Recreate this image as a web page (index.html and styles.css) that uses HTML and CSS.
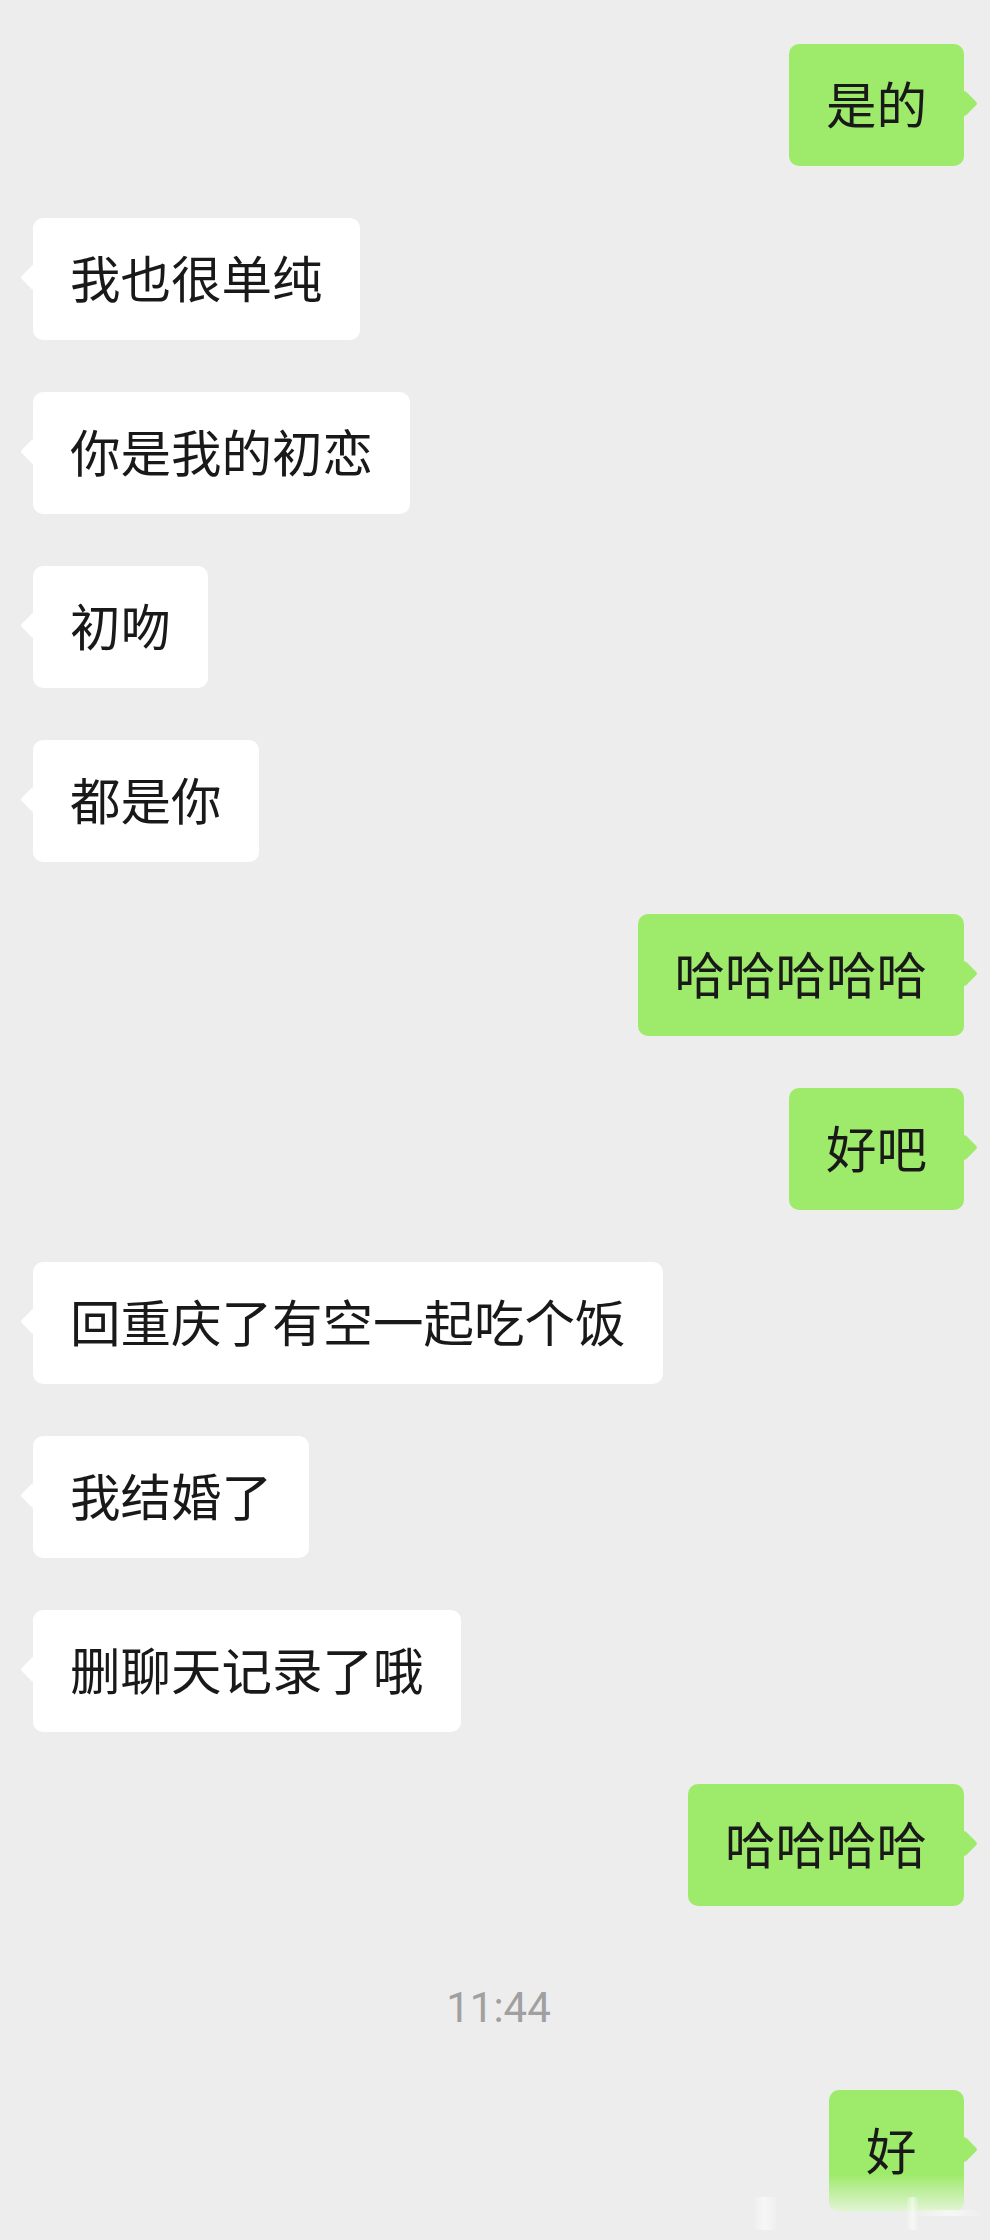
FILE: index.html
```html
<!DOCTYPE html>
<html lang="zh-CN">
<head>
    <meta charset="UTF-8">
    <meta name="viewport" content="width=device-width, initial-scale=1.0">
    <title>聊天记录</title>
    <link rel="stylesheet" href="styles.css">
</head>
<body>
    <div class="chat">
        <div class="row mine"><div class="bubble">是的</div></div>
        <div class="row theirs"><div class="bubble">我也很单纯</div></div>
        <div class="row theirs"><div class="bubble">你是我的初恋</div></div>
        <div class="row theirs"><div class="bubble">初吻</div></div>
        <div class="row theirs"><div class="bubble">都是你</div></div>
        <div class="row mine"><div class="bubble">哈哈哈哈哈</div></div>
        <div class="row mine"><div class="bubble">好吧</div></div>
        <div class="row theirs"><div class="bubble">回重庆了有空一起吃个饭</div></div>
        <div class="row theirs"><div class="bubble">我结婚了</div></div>
        <div class="row theirs"><div class="bubble">删聊天记录了哦</div></div>
        <div class="row mine"><div class="bubble">哈哈哈哈</div></div>
        <div class="time">11:44</div>
        <div class="row mine"><div class="bubble last">好</div></div>
    </div>
    <div class="ghost">
        <span class="bar bar-a"></span>
        <span class="bar bar-b"></span>
        <span class="bar bar-c"></span>
    </div>
</body>
</html>
```

FILE: styles.css
```css
html, body {
    margin: 0;
    padding: 0;
}
body {
    background: #ededed;
    font-family: "Noto Sans CJK SC", "Noto Sans", sans-serif;
    height: 2240px;
    overflow: hidden;
    position: relative;
}
.chat {
    display: flex;
    flex-direction: column;
    gap: 52px;
    padding: 44px 26px 0 33px;
}
.row {
    display: flex;
}
.row.mine {
    justify-content: flex-end;
}
.bubble {
    position: relative;
    min-width: 61px;
    font-size: 50.5px;
    line-height: 70px;
    padding: 23px 37px 29px;
    border-radius: 10px;
    color: #191919;
    background: #ffffff;
    white-space: nowrap;
}
.bubble::before {
    content: "";
    position: absolute;
    top: 50px;
    width: 19px;
    height: 19px;
    border-radius: 3px;
    background: inherit;
    transform: rotate(45deg);
}
.theirs .bubble::before {
    left: -9.5px;
}
.mine .bubble {
    background: #9eea6a;
}
.mine .bubble::before {
    right: -9.5px;
}
.mine .bubble.last {
    background: linear-gradient(to bottom, #9eea6a 0, #9eea6a 84px, #e3f4d8 122px);
}
.mine .bubble.last::before {
    background: #9eea6a;
}
.time {
    margin-top: 20px;
    height: 60px;
    line-height: 60px;
    text-align: center;
    font-family: Roboto, "Liberation Sans", sans-serif;
    font-size: 42px;
    color: #a0a0a0;
}
.ghost {
    position: absolute;
    left: 0;
    right: 0;
    bottom: 0;
    height: 50px;
    pointer-events: none;
}
.bar {
    position: absolute;
    background: linear-gradient(to right, rgba(255,255,255,0.1), rgba(255,255,255,0.55), rgba(255,255,255,0.1));
    border-radius: 4px;
}
.bar-a {
    left: 754px;
    top: 7px;
    width: 22px;
    height: 33px;
}
.bar-b {
    left: 907px;
    top: 7px;
    width: 11px;
    height: 33px;
}
.bar-c {
    left: 918px;
    top: 20px;
    width: 62px;
    height: 6px;
}
```
